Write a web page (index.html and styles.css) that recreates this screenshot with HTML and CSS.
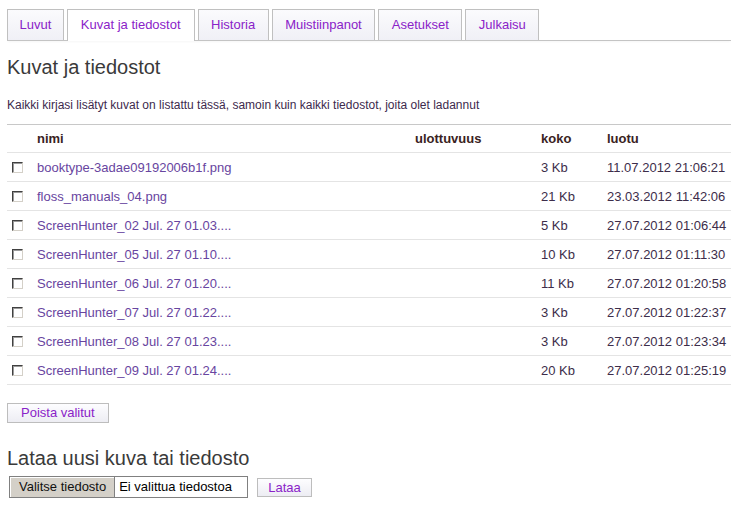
FILE: index.html
```html
<!DOCTYPE html>
<html lang="fi">
<head>
<meta charset="utf-8">
<title>Kuvat ja tiedostot</title>
<link rel="stylesheet" href="styles.css">
</head>
<body>
<nav class="tabs">
  <a class="tab">Luvut</a>
  <a class="tab active">Kuvat ja tiedostot</a>
  <a class="tab">Historia</a>
  <a class="tab">Muistiinpanot</a>
  <a class="tab">Asetukset</a>
  <a class="tab">Julkaisu</a>
</nav>
<h1 class="title first">Kuvat ja tiedostot</h1>
<p class="intro">Kaikki kirjasi lisätyt kuvat on listattu tässä, samoin kuin kaikki tiedostot, joita olet ladannut</p>
<table class="files">
  <colgroup><col class="c-check"><col class="c-name"><col class="c-dim"><col class="c-size"><col></colgroup>
  <thead>
    <tr><th></th><th>nimi</th><th>ulottuvuus</th><th>koko</th><th>luotu</th></tr>
  </thead>
  <tbody>
    <tr><td><span class="cb"></span></td><td><a class="link">booktype-3adae09192006b1f.png</a></td><td></td><td>3 Kb</td><td>11.07.2012 21:06:21</td></tr>
    <tr><td><span class="cb"></span></td><td><a class="link">floss_manuals_04.png</a></td><td></td><td>21 Kb</td><td>23.03.2012 11:42:06</td></tr>
    <tr><td><span class="cb"></span></td><td><a class="link">ScreenHunter_02 Jul. 27 01.03....</a></td><td></td><td>5 Kb</td><td>27.07.2012 01:06:44</td></tr>
    <tr><td><span class="cb"></span></td><td><a class="link">ScreenHunter_05 Jul. 27 01.10....</a></td><td></td><td>10 Kb</td><td>27.07.2012 01:11:30</td></tr>
    <tr><td><span class="cb"></span></td><td><a class="link">ScreenHunter_06 Jul. 27 01.20....</a></td><td></td><td>11 Kb</td><td>27.07.2012 01:20:58</td></tr>
    <tr><td><span class="cb"></span></td><td><a class="link">ScreenHunter_07 Jul. 27 01.22....</a></td><td></td><td>3 Kb</td><td>27.07.2012 01:22:37</td></tr>
    <tr><td><span class="cb"></span></td><td><a class="link">ScreenHunter_08 Jul. 27 01.23....</a></td><td></td><td>3 Kb</td><td>27.07.2012 01:23:34</td></tr>
    <tr><td><span class="cb"></span></td><td><a class="link">ScreenHunter_09 Jul. 27 01.24....</a></td><td></td><td>20 Kb</td><td>27.07.2012 01:25:19</td></tr>
  </tbody>
</table>
<div class="actions"><button class="btn">Poista valitut</button></div>
<h2 class="title second">Lataa uusi kuva tai tiedosto</h2>
<div class="upload">
  <span class="file"><span class="file-btn">Valitse tiedosto</span><span class="file-name">Ei valittua tiedostoa</span></span>
  <button class="btn small">Lataa</button>
</div>
</body>
</html>
```
FILE: styles.css
```css
html, body {
  margin: 0;
  padding: 0;
  background: #fff;
}
body {
  padding-left: 7px;
  font-family: "Liberation Sans", Arial, sans-serif;
  font-size: 13px;
  color: #3d2d4a;
}
.tabs {
  display: flex;
  gap: 3px;
  margin-top: 9px;
  height: 31px;
  border-bottom: 1px solid #c4c4c4;
  box-shadow: 0 2px 2px -1px rgba(0,0,0,0.04);
}
.tab {
  display: block;
  height: 30px;
  line-height: 30px;
  padding: 0 12.5px;
  border: 1px solid #c0c0c0;
  border-bottom: none;
  background: linear-gradient(#fbfbfd, #f0f0f6);
  color: #8a22c8;
  font-size: 13px;
  white-space: nowrap;
}
.tab:first-child {
  padding: 0 11.5px;
}
.tab.active {
  background: #fff;
  height: 31px;
  margin-bottom: -1px;
  padding: 0 13px;
}
.title {
  font-size: 20px;
  font-weight: normal;
  line-height: 23px;
  color: #3a3a3a;
  margin: 0;
}
.title.first {
  margin-top: 15px;
}
.intro {
  font-size: 12px;
  line-height: 15px;
  margin: 19px 0 0;
  color: #3d2a4d;
}
.files {
  margin-top: 11px;
  width: 100%;
  border-collapse: collapse;
  table-layout: fixed;
  border-top: 1px solid #c8c8c8;
}
.c-check { width: 30px; }
.c-name { width: 378px; }
.c-dim { width: 126px; }
.c-size { width: 66px; }
.files th, .files td {
  height: 28px;
  padding: 0;
  text-align: left;
  border-bottom: 1px solid #e4e4e4;
  white-space: nowrap;
  font-size: 13px;
}
.files th {
  height: 27px;
  font-weight: bold;
  color: #3a2222;
}
.files td {
  color: #3d2d4a;
}
.link {
  color: #6845a0;
}
.cb {
  display: block;
  width: 9px;
  height: 9px;
  margin-left: 5px;
  border-top: 1px solid #404040;
  border-left: 1px solid #404040;
  border-right: 1px solid #d4d0c8;
  border-bottom: 1px solid #d4d0c8;
  background: #fff;
  box-shadow: inset 1px 1px 0 #9a9a9a;
}
.actions {
  margin-top: 18px;
}
.btn {
  font-family: "Liberation Sans", Arial, sans-serif;
  font-size: 13px;
  color: #8a22c8;
  height: 20px;
  padding: 0 13px;
  border: 1px solid #bdbdbd;
  background: linear-gradient(#fdfdff, #ededf3);
  line-height: 18px;
  margin: 0;
}
.title.second {
  margin-top: 24px;
}
.upload {
  display: flex;
  align-items: center;
  margin-top: 6px;
  padding-left: 2px;
}
.file {
  display: flex;
  height: 20px;
  border: 1px solid #808080;
  background: #fff;
  font-size: 13px;
  line-height: 20px;
}
.file-btn {
  display: block;
  padding: 0 8px 0 9px;
  background: #d4d0c8;
  color: #111;
  border-right: 1px solid #808080;
  box-shadow: inset 1px 1px 0 #fff;
}
.file-name {
  display: block;
  width: 128px;
  padding-left: 4px;
  color: #000;
}
.btn.small {
  margin-left: 9px;
  height: 19px;
  padding: 0 10px;
  line-height: 17px;
}
```
